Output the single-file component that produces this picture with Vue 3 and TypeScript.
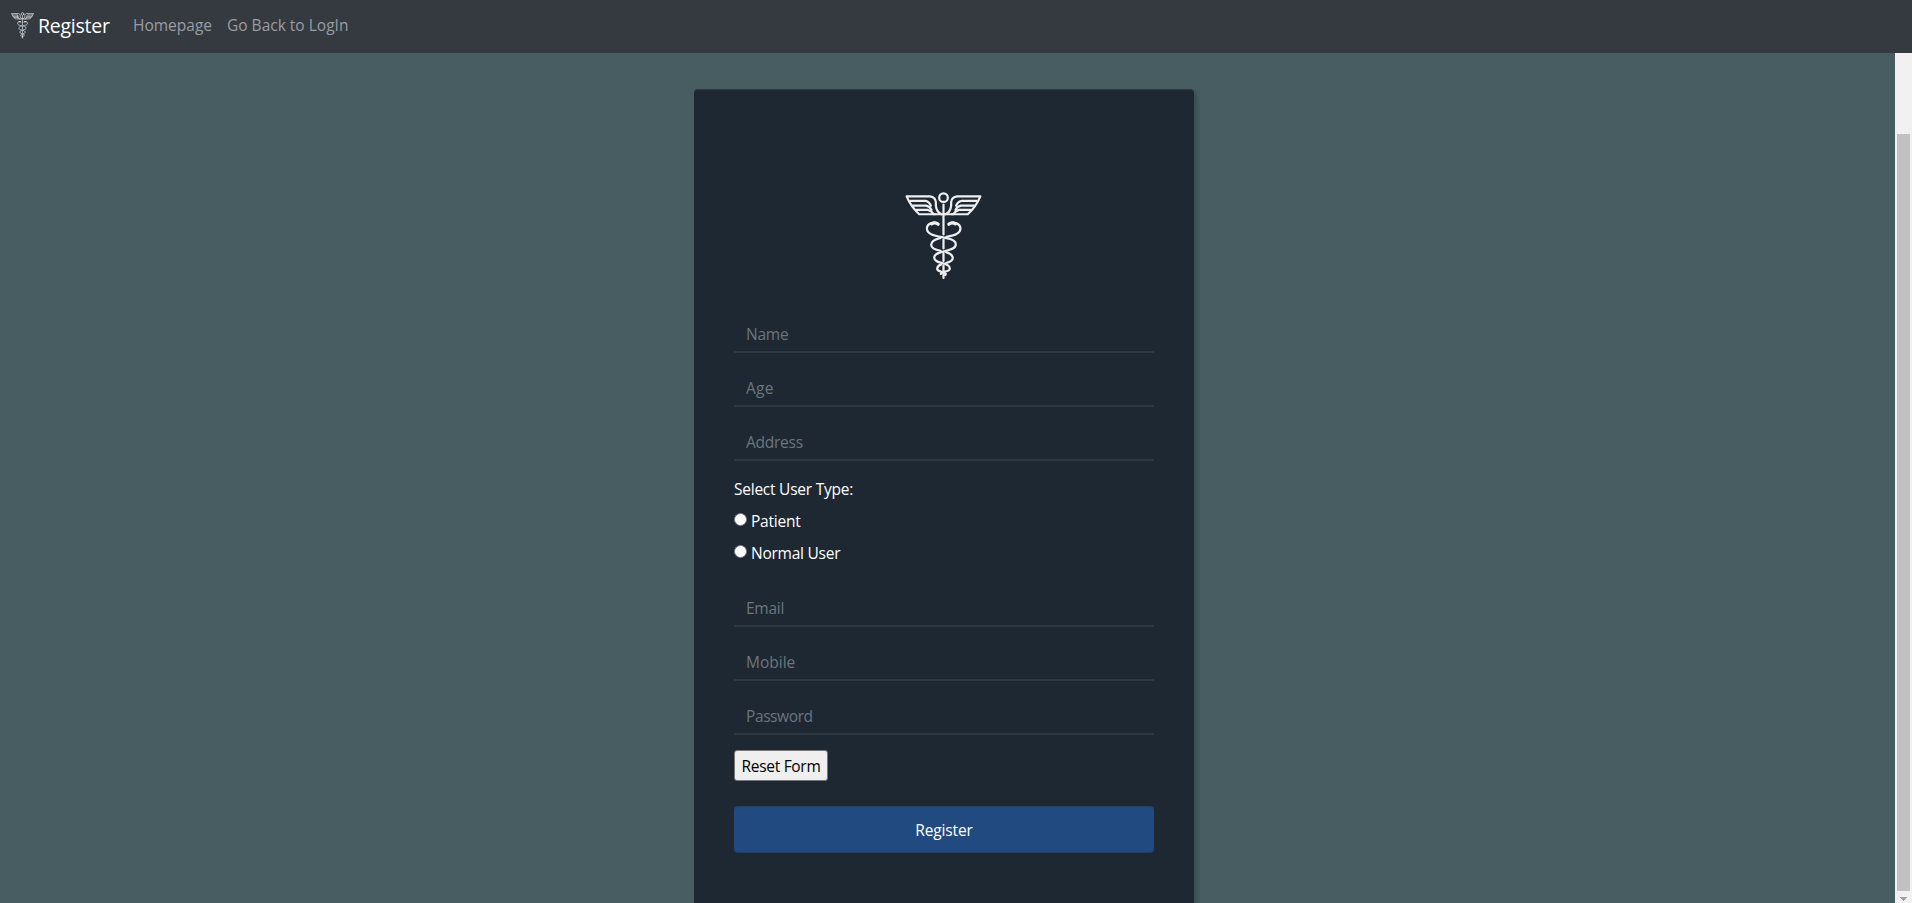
<script setup lang="ts">
import { ref, reactive } from 'vue'

interface Field {
  key: string
  label: string
  type: string
}

const personal: Field[] = [
  { key: 'name', label: 'Name', type: 'text' },
  { key: 'age', label: 'Age', type: 'text' },
  { key: 'address', label: 'Address', type: 'text' },
]
const account: Field[] = [
  { key: 'email', label: 'Email', type: 'email' },
  { key: 'mobile', label: 'Mobile', type: 'text' },
  { key: 'password', label: 'Password', type: 'password' },
]
const userTypes: string[] = ['Patient', 'Normal User']

const form = reactive<Record<string, string>>({})
const userType = ref('')

function resetForm(): void {
  for (const f of [...personal, ...account]) form[f.key] = ''
  userType.value = ''
}
</script>

<template>
  <div class="page">
    <svg class="defs" width="0" height="0" aria-hidden="true">
      <symbol id="caduceus" viewBox="45 35 230 265">
        <g fill="none" stroke="currentColor" stroke-width="6.6" stroke-linejoin="round" stroke-linecap="round">
          <circle cx="160" cy="52" r="13" />
          <path d="M160 73V163M160 178V205M160 219V243M160 256V294" />
          <path d="M135 102H87Q62 79 49 48H119Q136 50 137 66V76Q139 96 154 102" />
          <path d="M61 62H107M68 76H108M78 89H113M107 62Q117 64 122 76M108 76Q119 79 124 89M113 89Q123 91 130 101" />
          <path d="M185 102H233Q258 79 271 48H201Q184 50 183 66V76Q181 96 166 102" />
          <path d="M259 62H213Q203 64 198 76M252 76H212Q201 79 196 89M242 89H207Q197 91 190 101M130 102H190" />
          <path d="M144 131C134 123 110 128 110 145C110 178 197 164 197 193C197 217 132 208 132 233C132 252 179 246 179 265C179 277 153 272 152 282" />
          <path d="M176 131C186 123 211 128 211 145C211 163 184 168 169 170M151 173C135 177 123 182 123 194C123 205 138 210 151 212M168 216C180 220 188 225 188 234C188 242 179 246 168 249M153 253C145 256 141 260 141 266C141 272 148 273 153 275M162 278C168 280 168 282 165 285" />
          <path d="M124 131Q135 124 144 132M196 131Q185 124 176 132" stroke-width="9.5" />
        </g>
      </symbol>
    </svg>

    <nav class="navbar">
      <a class="brand"><svg class="brand-icon"><use href="#caduceus" /></svg><span>Register</span></a>
      <a class="link home">Homepage</a>
      <a class="link login">Go Back to LogIn</a>
    </nav>

    <div class="body">
      <main class="content">
        <form class="card" @submit.prevent>
          <svg class="logo"><use href="#caduceus" /></svg>
          <input v-for="f in personal" :key="f.key" v-model="form[f.key]" class="field" :class="f.key" :type="f.type" :placeholder="f.label" />
          <div class="types">
            <p class="caption">Select User Type:</p>
            <label v-for="t in userTypes" :key="t" class="option">
              <input v-model="userType" type="radio" name="userType" :value="t" /><span>{{ t }}</span>
            </label>
          </div>
          <input v-for="f in account" :key="f.key" v-model="form[f.key]" class="field" :class="f.key" :type="f.type" :placeholder="f.label" />
          <button class="reset" type="button" @click="resetForm">Reset Form</button>
          <button class="submit" type="submit">Register</button>
        </form>
      </main>
      <div class="scrollbar">
        <div class="thumb"></div>
        <svg class="arrow" width="7" height="4" viewBox="0 0 7 4" shape-rendering="crispEdges"><path d="M0 0H7V1H6V2H5V3H4V4H3V3H2V2H1V1H0Z" fill="#a0a0a0" /></svg>
      </div>
    </div>
  </div>
</template>

<style>
html,
body {
  overflow: hidden;
}
</style>

<style scoped>
.page {
  height: 903px;
  display: flex;
  flex-direction: column;
  overflow: hidden;
  background: #475d62;
  color: #fff;
  font: 15.5px/24px "Open Sans", "Noto Sans", sans-serif;
}
.page * {
  box-sizing: border-box;
}
.defs {
  position: absolute;
}
.navbar {
  height: 53px;
  flex: none;
  display: flex;
  align-items: flex-start;
  padding: 12px 0 0 11px;
  background: #343a40;
}
.brand {
  display: flex;
  width: 122px;
  font-size: 19.5px;
  line-height: 28px;
  letter-spacing: -0.25px;
}
.brand-icon {
  width: 23px;
  height: 27px;
  margin-right: 4px;
  color: #e4e5e6;
}
.link {
  color: #9a9da0;
  line-height: 26px;
}
.home {
  width: 94px;
}
.body {
  flex: 1;
  min-height: 0;
  display: flex;
}
.content {
  flex: 1;
  display: flex;
  justify-content: center;
  align-items: flex-start;
  padding: 36px 7px 0 0;
}
.card {
  width: 500px;
  height: 900px;
  padding: 102px 40px 0;
  display: flex;
  flex-direction: column;
  align-items: flex-start;
  background: #1e2833;
  border-top: 1px solid #2b3a43;
  border-radius: 4px;
  box-shadow: 3px 3px 4px rgba(0, 0, 0, 0.2);
}
.logo {
  width: 77px;
  height: 88px;
  margin: 0 0 31px 170.5px;
  color: #efeff2;
}
.field {
  width: 420px;
  height: 42px;
  margin: 0 0 12px;
  padding: 6px 12px 0;
  flex: none;
  font: inherit;
  letter-spacing: -0.25px;
  color: #fff;
  background: none;
  border: 0;
  border-bottom: 2px solid #2d3942;
  outline: 0;
}
.field::placeholder {
  color: #6c757d;
  opacity: 1;
}
.age {
  letter-spacing: 0.3px;
}
.mobile {
  letter-spacing: 0;
}
.password {
  letter-spacing: -0.4px;
}
.types {
  height: 112px;
  flex: none;
  padding-top: 4px;
  letter-spacing: -0.24px;
}
.caption {
  margin: 0 0 8px;
}
.option {
  display: flex;
  align-items: flex-start;
  height: 32px;
}
.option input {
  appearance: none;
  width: 13px;
  height: 13px;
  margin: 4px 4px 0 0;
  background: #fff;
  border: 1px solid #767676;
  border-radius: 50%;
}
.reset {
  width: 94px;
  height: 31px;
  flex: none;
  margin: 3px 0 25px;
  padding: 0;
  font: inherit;
  letter-spacing: -0.3px;
  color: #000;
  background: #efefef;
  border: 1px solid #767676;
  border-radius: 3px;
}
.submit {
  width: 420px;
  height: 47px;
  flex: none;
  padding: 0;
  font: inherit;
  letter-spacing: -0.15px;
  color: #fff;
  background: #214a80;
  border: 1px solid #21406b;
  border-width: 1px 0;
  border-radius: 4px;
}
.scrollbar {
  width: 17px;
  display: flex;
  flex-direction: column;
  align-items: center;
  padding-top: 81px;
  background: #f1f1f1;
}
.thumb {
  width: 13px;
  height: 757px;
  background: #c1c1c1;
}
.arrow {
  margin-top: 6px;
}
</style>
